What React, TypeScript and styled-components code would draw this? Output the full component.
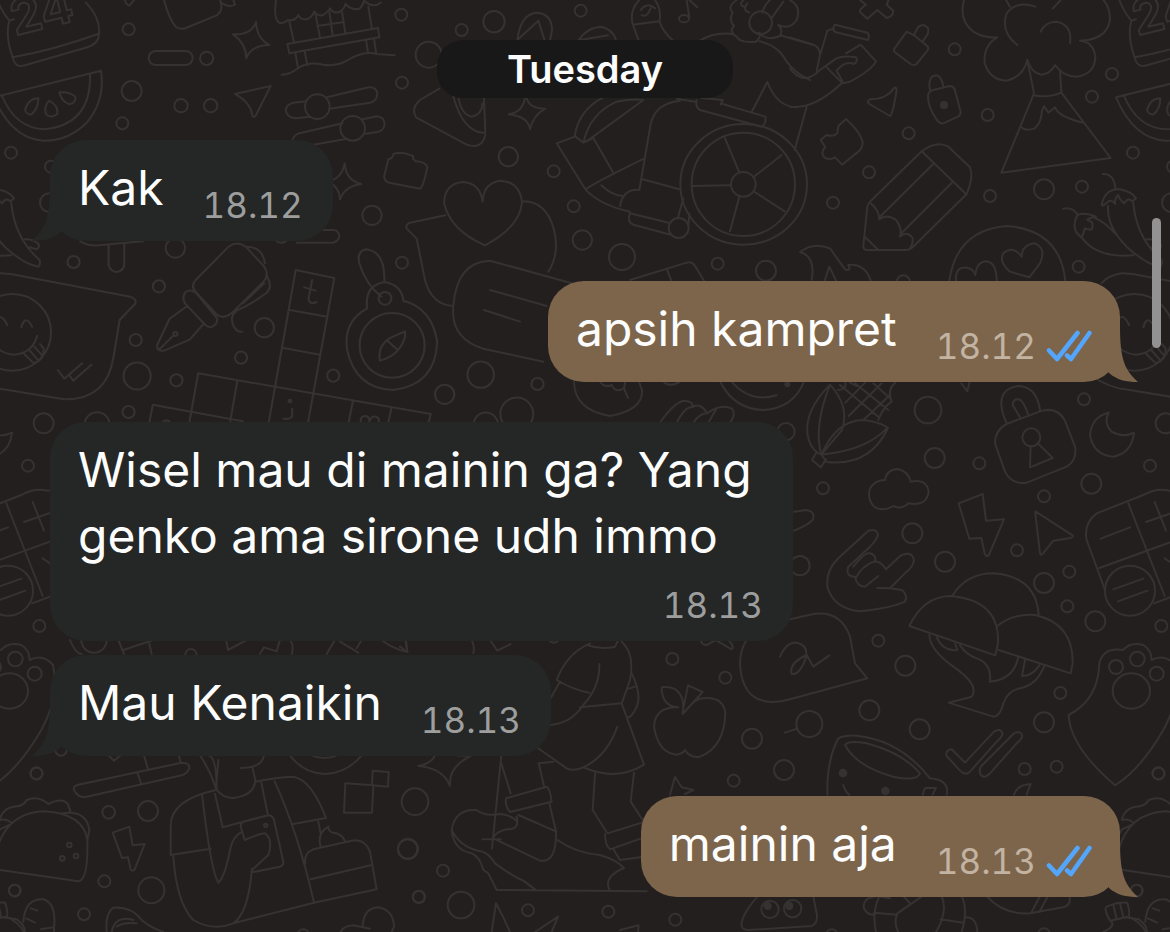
import React from "react";
import styled, { createGlobalStyle, css } from "styled-components";

const color = {
  page: "#231f1f",
  doodle: "#363232",
  pill: "#181818",
  incoming: "#242726",
  outgoing: "#7c654b",
  text: "#fdfdfd",
  timeIn: "#9d9e9d",
  timeOut: "#c2b3a2",
  tick: "#53a6fb",
  scroll: "#949192",
};

const GlobalStyle = createGlobalStyle`
  * { box-sizing: border-box; }
  body {
    margin: 0;
    background: ${color.page};
    color: ${color.text};
    font-family: Inter, "Noto Sans", sans-serif;
  }
`;

const Page = styled.main`
  position: relative;
  min-height: 100vh;
  overflow: hidden;
`;

const Wallpaper = styled.svg`
  position: absolute;
  inset: 0;
  width: 100%;
  height: 100%;
`;

const Conversation = styled.section`
  position: relative;
  display: flex;
  flex-direction: column;
  padding: 40px 50px 36px;
`;

const DayLabel = styled.h2`
  align-self: center;
  margin: 0;
  padding: 0 70px;
  border-radius: 26px;
  background: ${color.pill};
  font-size: 38px;
  font-weight: 600;
  line-height: 58px;
`;

const Messages = styled.ol`
  display: flex;
  flex-direction: column;
  margin: 0;
  padding: 2px 0 0;
  list-style: none;
`;

type Side = "in" | "out";

const Row = styled.li<{ $side: Side; $grouped?: boolean }>`
  display: flex;
  justify-content: ${(p) => (p.$side === "out" ? "flex-end" : "flex-start")};
  margin-top: ${(p) => (p.$grouped ? "14px" : "40px")};
`;

const Bubble = styled.article<{ $side: Side; $stacked?: boolean }>`
  position: relative;
  display: flex;
  align-items: flex-end;
  column-gap: 39px;
  max-width: 743px;
  padding: 15px 30px 16px 28px;
  border-radius: 36px;
  background: ${(p) => (p.$side === "out" ? color.outgoing : color.incoming)};
  ${(p) =>
    p.$side === "out" &&
    css`
      padding-right: 28px;
    `}
  ${(p) =>
    p.$stacked &&
    css`
      flex-direction: column;
      row-gap: 12px;
    `}
`;

const MessageText = styled.p`
  margin: 0;
  padding-bottom: 4px;
  font-size: 48px;
  line-height: 66px;
`;

const Meta = styled.footer<{ $side: Side }>`
  display: flex;
  align-items: center;
  gap: 10px;
  color: ${(p) => (p.$side === "out" ? color.timeOut : color.timeIn)};
  font-size: 35px;
  line-height: 40px;
  font-variant-numeric: tabular-nums;
`;

const TailShape = styled.svg<{ $side: Side }>`
  position: absolute;
  bottom: 0;
  width: 40px;
  height: 56px;
  ${(p) =>
    p.$side === "out"
      ? css`
          right: -18px;
          fill: ${color.outgoing};
        `
      : css`
          left: -18px;
          fill: ${color.incoming};
          transform: scaleX(-1);
        `}
`;

const ScrollThumb = styled.div`
  position: absolute;
  top: 218px;
  right: 9px;
  width: 9px;
  height: 130px;
  border-radius: 5px;
  background: ${color.scroll};
`;

function Tail({ side }: { side: Side }) {
  return (
    <TailShape $side={side} viewBox="0 0 40 56" aria-hidden="true">
      <path d="M22 0 C22 34 27 44 40 56 C28 56 19 54 11 47 L0 20 L10 0Z" />
    </TailShape>
  );
}

function ReadTicks() {
  return (
    <svg width="46" height="32" viewBox="0 0 46 32" role="img" aria-label="Read">
      <g fill="none" stroke={color.tick} strokeWidth="4.5" strokeLinecap="round" strokeLinejoin="round">
        <path d="M3 20.500 L11 29 L31.500 3" />
        <path d="M21 25.500 L25 29 L43.500 3" />
      </g>
    </svg>
  );
}

type Dot = [number, number, number];

function Dots({ items, stretch = 1 }: { items: Dot[]; stretch?: number }) {
  return (
    <>
      {items.map(([cx, cy, r]) => (
        <ellipse key={`${cx}-${cy}-${r}`} cx={cx} cy={cy} rx={r} ry={r * stretch} />
      ))}
    </>
  );
}

/* Each cluster is drawn on a grid finer than the page. */
function Cluster({
  x,
  y,
  scale = "0.33333",
  children,
}: {
  x: number;
  y: number;
  scale?: string;
  children: React.ReactNode;
}) {
  return <g transform={`translate(${x} ${y}) scale(${scale})`}>{children}</g>;
}

function CakeAndMelon() {
  return (
    <Cluster x={0} y={0}>
      <path d="M-8 0 Q5 35 28 62 M28 62 Q15 110 38 172 Q45 205 75 196 L262 142 Q298 130 297 100 Q302 55 258 8 M38 172 Q160 150 294 102 M28 62 L42 58" />
      <text x="44" y="106" fontSize="146" fontWeight="700" transform="rotate(-14 50 100)">24</text>
      <path d="M-18 292 L303 212 Q316 300 262 366 Q205 424 130 422 Q35 416 -18 292Z M5 285 Q45 385 135 388 Q275 372 270 222" />
      <path d="M115 295 Q85 295 75 330 Q80 345 95 343 Q115 325 115 295Z M147 302 Q128 325 140 345 Q155 355 172 342 Q175 315 147 302Z M178 277 Q185 305 208 313 Q228 310 226 290 Q210 275 178 277Z" />
      <rect x="446" y="153" width="132" height="42" rx="21" />
      <path d="M374 0 Q378 14 388 17 L402 0 M492 0 Q508 60 528 81 Q540 90 558 84 L650 46 Q672 32 660 0 M662 6 Q685 25 705 14 L700 0" />
      <path d="M768 66 Q770 115 808 135 Q755 135 739 174 Q738 130 699 103 Q755 105 768 66Z" />
      <path d="M828 0 Q820 58 838 68 Q852 72 864 60 Q885 65 895 45 Q900 60 920 58 Q938 50 942 35 Q955 50 970 45 Q985 35 990 25 Q1000 42 1018 36 Q1035 25 1036 12 Q1055 32 1078 26 Q1088 18 1092 2 Q1120 26 1142 8" />
      <path d="M868 64 L882 128 M946 40 L960 112 M1105 20 L1116 88 M1026 36 L1036 100 M988 34 L998 106 M952 78 L1032 66 M862 132 L1134 84 L1138 112 L868 160Z M886 158 L894 204 M914 154 L922 196 M1098 120 L1104 158 M1122 116 L1128 156 M845 224 Q870 224 895 204 Q925 184 970 194 Q1010 200 1040 182 Q1090 150 1130 162 L1184 166" />
      <path d="M812 258 L705 282 Q752 308 757 345 Q760 358 768 345Z" />
      <path d="M918 304 L880 308 Q850 318 860 340 Q870 358 895 354 L930 350 M980 292 L1106 262 Q1130 260 1132 282 Q1130 304 1110 308 L988 326 M878 418 Q885 400 905 398 L1028 370 M1088 358 L1130 349 Q1152 350 1154 372 Q1152 392 1132 396 L1092 402 M940 434 L1042 416" />
      <path d="M890 728 L1000 728 Q1018 722 1018 706 Q1014 690 1000 690 L970 690" />
      <Dots items={[[386, 88, 18], [395, 273, 30], [367, 370, 18], [543, 317, 20], [632, 317, 20], [620, 175, 20], [33, 458, 18], [153, 500, 18], [148, 608, 28], [952, 320, 37], [1058, 385, 37], [1116, 646, 29], [526, 744, 29]]} />
      <path d="M1034 490 Q1038 542 1084 552 Q1035 558 1020 598 Q1018 560 985 545 Q1025 535 1034 490Z" />
      <path d="M1195 458 L1180 462 Q1180 475 1165 478 L1152 530 Q1155 548 1175 550 L1260 566 Q1270 560 1282 502 Q1278 486 1248 484 Q1235 476 1240 468 L1215 460Z" />
    </Cluster>
  );
}

function Wheelchair() {
  return (
    <Cluster x={400} y={0}>
      <path d="M352 120 Q362 40 412 38 Q455 42 456 90 L450 122 M352 120 L415 62 L434 122 M535 122 Q560 82 605 80 Q640 90 648 120 M540 120 L624 106" />
      <path d="M716 122 L698 72 Q688 30 718 0 M698 74 L778 64 Q786 30 765 0 M778 64 Q790 98 820 122 M722 30 Q740 5 765 25 M725 45 Q740 55 752 25 M860 0 L868 52 M868 0 L892 22" />
      <ellipse cx="852" cy="56" rx="15" ry="11" />
      <path d="M1010 0 Q980 20 998 38 Q985 60 1002 78 Q985 95 1010 110 Q1020 130 1068 125 Q1085 110 1078 98 Q1100 125 1140 108 Q1150 90 1135 75 Q1170 90 1190 60 Q1205 20 1170 0 M1030 0 Q1015 15 1032 20 M1048 38 Q1025 30 1042 10 M1087 38 Q1092 15 1110 0 M1114 55 L1150 5" />
      <circle cx="1082" cy="68" r="34" />
      <path d="M900 122 Q940 95 1000 102 M1078 124 Q1135 135 1160 185 Q1185 220 1230 240 M1140 106 L1240 135 M1056 334 L1102 246 Q1130 320 1190 322" />
      <path d="M118 266 L60 300 Q32 325 48 352 L200 434 Q245 450 256 405 L252 292 M160 290 Q190 395 250 398 M176 296 Q185 345 215 350 Q245 345 248 310" />
      <path d="M380 292 Q385 325 436 326 Q400 345 390 388 Q385 350 326 343 Q370 335 375 292" />
      <path d="M524 410 Q535 330 610 292 M550 428 Q570 340 650 305 Q700 295 730 300 L560 424 M524 410 L470 430 L556 568 Q600 540 732 476 M526 410 L550 428 L580 414 L642 522 M556 568 Q600 615 690 635 M604 556 Q635 586 668 588" />
      <path d="M840 302 Q765 310 752 372 L718 570 Q670 565 660 618 M728 538 L838 568 M690 640 L806 668 M690 640 Q680 665 700 674 L812 704 M850 595 L834 652 M868 640 L866 672" />
      <path d="M890 300 Q885 320 900 330 L1085 380 Q1100 370 1096 350 L968 312 M830 296 L890 306 M905 294 L968 300 L962 314" />
      <Dots items={[[1030, 553, 155], [1030, 553, 37], [836, 684, 30]]} />
      <ellipse cx="1031" cy="553" rx="190" ry="181" />
      <path d="M975 415 L1017 515 M1062 530 L1145 465 M1064 576 L1154 634 M1018 590 L990 694 M990 556 L878 558" />
      <path d="M248 605 Q250 550 300 542 Q360 545 366 608 Q360 680 255 736 Q150 690 132 608 Q135 550 190 546 Q240 550 248 605Z" />
      <path d="M136 646 L30 668 Q15 675 20 686 L50 716 L75 840 Q95 915 160 918 M370 604 Q440 605 462 690 Q480 760 445 815 M160 918 Q170 785 270 782 L640 884 M160 918 Q150 1015 250 1046 L430 1085 M270 870 L440 918 M252 930 L360 965" />
      <Dots items={[[4, 44, 18], [86, 164, 39], [185, 90, 18], [282, 65, 32], [542, 32, 18], [6, 248, 18], [325, 470, 29], [461, 514, 18], [521, 619, 18], [547, 720, 29], [666, 771, 39], [953, 791, 18], [1098, 812, 30], [6, 788, 18]]} />
      <path d="M690 840 L860 788 Q875 784 884 796 L912 842 M800 806 L814 842" />
    </Cluster>
  );
}

function PencilAndVolcano() {
  return (
    <Cluster x={790} y={0}>
      <path d="M210 0 L228 14 Q208 28 210 36 L232 56 L262 30 L290 54 Q310 48 310 32 L290 14 L296 0" />
      <path d="M0 112 L70 134 Q90 142 90 165 L80 212 M0 205 Q40 260 90 210 L138 176 Q160 165 198 172 Q205 185 192 192 Q165 180 140 212 L158 245 M92 160 L112 92 L130 86 M135 74 L232 98 Q240 105 234 120 L135 96 Q125 85 135 74Z M168 160 L212 134 L258 184 Q245 210 180 245 L158 250 L110 202 M0 320 Q70 330 155 250" />
      <path d="M316 142 L350 95 L372 106 L412 138 Q418 145 412 152 L380 192 Q372 198 362 192 L316 158 Q308 150 316 142Z M372 104 L384 82 Q398 68 414 84 Q418 98 408 110 L400 122" />
      <path d="M430 270 L480 258 Q490 258 494 268 L512 335 Q512 345 504 350 L460 370 Q450 372 442 362 Q412 320 414 285 Q418 272 430 270Z M420 270 Q412 228 440 226 Q455 230 460 260" />
      <circle cx="462" cy="315" r="9" fill={color.doodle} />
      <path d="M312 264 Q290 298 240 298 Q228 305 238 312 L300 348 Q308 345 320 270 Q318 260 312 264Z M50 320 L14 450" />
      <path d="M168 357 Q210 395 218 425 Q218 445 205 455 L156 494 L135 472 Q110 485 98 465 Q95 450 106 442 L92 420 L110 405 Q130 412 142 400 L145 378Z" />
      <path d="M395 454 Q440 420 475 440 L540 502 Q552 530 530 582 L368 742 Q360 750 350 750 L230 750 Q220 750 220 738 L232 620 Q235 608 245 600Z M395 454 L528 582 M432 490 L270 650 M486 548 L332 702 M240 608 Q268 630 268 658 Q290 640 318 660 Q338 685 330 710 Q350 690 368 714 Q370 730 360 745 M222 708 L265 750" />
      <path d="M522 0 Q505 60 550 95 Q580 115 622 112 Q580 135 584 190 Q600 240 650 242 Q700 230 712 180 Q725 220 755 224 Q780 222 795 195 Q820 230 860 230 Q915 222 916 170 Q910 125 870 122 Q950 120 960 60 Q960 20 940 0 M648 0 L660 20 M736 20 Q680 0 650 40 Q630 95 682 135 M752 95 Q765 65 800 65 Q848 75 840 130 M812 0 L788 26" />
      <path d="M712 180 L732 280 L634 518 L962 474 L814 278 L810 210 M730 286 Q775 295 814 278 M692 380 Q705 395 735 385 Q755 365 755 335 L762 318 L775 338 L795 322 Q805 350 880 368" />
      <path d="M938 522 Q972 520 976 565 M935 615 Q945 565 990 568 Q1025 575 1038 595 Q1030 600 1028 605 Q1015 590 1002 610 Q985 595 985 585 Q975 590 975 612 Q965 595 950 608 Q940 620 935 615Z M954 618 Q950 680 1010 740 Q1070 795 1112 800 Q1118 790 1115 780 Q1040 715 1030 610 M820 626 Q845 620 862 642 M862 645 Q885 635 918 650 Q890 655 892 660 Q915 665 905 688 Q890 690 885 685 Q880 700 875 712 Q840 690 862 645Z M912 652 Q950 670 975 700 M875 712 Q920 775 1030 766 M1070 718 Q1090 715 1110 730 Q1118 740 1105 748 L1085 742" />
      <Dots items={[[494, 148, 18], [356, 400, 18], [237, 517, 18], [129, 608, 18], [593, 345, 18], [600, 588, 18], [762, 568, 30], [876, 560, 18], [906, 290, 18], [966, 222, 18], [866, 800, 18], [340, 846, 20]]} />
      <path d="M65 840 Q78 770 30 756 Q70 725 120 745 L165 808 Q185 815 175 795 Q225 790 242 842 M104 842 L118 800 L138 842 M478 842 Q500 690 650 678 Q810 690 826 842 M498 842 Q495 800 530 803 Q550 805 556 825 Q560 785 590 784 Q620 790 620 842 M695 770 Q695 735 735 730 Q770 745 750 790 L718 832 L660 815 Q625 785 640 760 Q670 735 695 770Z" />
      <path d="M934 850 Q955 826 996 820" />
    </Cluster>
  );
}

function PenAndCompass() {
  return (
    <Cluster x={0} y={230} scale="0.35714 0.33333">
      <path d="M225 34 Q245 48 275 46 L400 34 M304 46 L304 105 Q310 126 328 126 Q348 122 348 100 L348 42 M775 34 Q788 42 800 34" />
      <path d="M0 130 Q30 130 60 138 L365 200 Q385 208 378 222 L335 270 L318 380 Q300 510 180 508 L0 476" />
      <ellipse cx="35" cy="307" rx="108" ry="115" />
      <path d="M-20 290 Q-2 235 20 285 M60 292 Q70 250 90 290 M-30 330 Q0 372 40 374 Q90 370 104 318 M68 372 L95 400 Q125 390 122 355 L112 342 M82 360 L105 388 M96 350 L116 374 M162 420 L180 446 L230 400 M196 438 L205 452 L256 404" />
      <path d="M640 50 Q665 30 690 52 L740 110 Q755 135 738 155 L648 250 Q625 270 605 252 L550 188 Q532 170 548 150Z M690 50 Q735 50 742 100 M748 140 Q765 170 745 190 Q700 225 665 240 Q640 260 655 290 Q665 308 678 305 M740 160 L680 220 M520 186 Q535 175 550 190 L608 265 Q610 285 590 292 Q580 290 575 285 L518 220 Q508 200 520 186Z M524 228 L475 266 L440 345 Q438 365 460 362 L532 328 L568 284 M448 356 L486 316" />
      <circle cx="491" cy="312" r="6" />
      <path d="M828 120 L936 144 L862 580 M828 120 L752 580 M812 240 L916 260 M794 354 L896 374 M555 430 L1206 552 L1200 578 M555 430 L530 578 M664 456 L644 578 M988 514 L976 578 M1096 534 L1088 574 M428 524 L680 574 M428 524 L418 578" />
      <path d="M874 150 L864 205 Q866 226 886 216 M852 172 L884 182 M818 536 L818 560 Q810 570 794 566 M1010 575 Q1010 556 1024 558 Q1036 562 1034 575 Q1040 556 1052 560 Q1064 564 1060 578 M456 576 Q466 566 476 576" />
      <circle cx="812" cy="513" r="4" fill={color.doodle} />
      <path d="M1028 235 Q1020 165 1078 156 Q1125 165 1130 214 M1076 156 Q1080 65 1025 58 Q998 65 1006 100 Q1025 165 1068 200 M1028 235 Q960 275 972 360 Q995 475 1100 480 Q1220 465 1224 335 Q1210 235 1130 212 M1134 304 L1134 320 Q1120 375 1064 392 Q1056 350 1090 325Z M1086 334 L1114 360" />
      <Dots
        stretch={1.07}
        items={[[1078, 205, 18], [1098, 346, 91], [206, 96, 17], [445, 169, 17], [380, 330, 17], [384, 438, 38], [494, 451, 17], [360, 546, 17], [740, 293, 27], [675, 383, 17], [933, 437, 17], [1346, 434, 37], [1245, 493, 27], [1505, 462, 17], [1447, 552, 46], [1360, 584, 34], [272, 584, 35]]}
      />
    </Cluster>
  );
}

function HandAndFace() {
  return (
    <Cluster x={500} y={200}>
      <path d="M222 540 Q220 630 330 648 Q430 630 426 570 L415 540 M300 545 Q315 565 335 555 Q345 580 372 565 L384 594 M372 565 L376 545 M480 668 Q520 610 550 602 Q585 605 575 622 Q600 605 622 640 Q660 610 695 625 Q710 640 690 668 M530 668 Q555 620 575 622 M580 668 Q600 640 620 640 M625 668 L650 625 M658 540 Q700 628 790 630 Q880 625 912 545 M695 545 Q750 610 830 586" />
      <path d="M490 544 Q510 565 540 544" />
      <circle cx="862" cy="553" r="6" fill={color.doodle} />
    </Cluster>
  );
}

function CornAndLock() {
  return (
    <Cluster x={790} y={370}>
      <path d="M120 44 Q45 120 52 190 Q60 240 94 254 Q70 170 120 44 Q180 110 156 180 L94 254 Q140 150 220 150 Q270 155 294 174 Q240 290 110 276 L94 254 Q230 240 290 175 M78 250 L66 270 L92 292 L108 268 M315 38 Q290 60 305 95 Q280 110 265 150 M180 38 L200 48 M144 60 Q170 60 166 38 M150 45 L265 140 M195 40 L295 120 M250 40 L300 85 M225 38 L166 98 M275 40 L176 138 M300 75 L220 150" />
      <path d="M285 330 Q290 298 325 297 Q355 305 362 335 Q410 325 416 365 Q410 410 355 400 Q335 420 310 408 Q280 425 255 412 Q230 390 240 355 Q255 330 285 330Z" />
      <path d="M514 40 L532 64 L538 38 M650 160 Q605 60 685 48 Q740 50 750 120 M690 142 L668 105 Q670 85 686 88 Q700 90 715 135 M615 220 Q615 180 650 162 L750 124 Q800 108 824 150 L855 230 Q862 270 830 290 L710 338 Q665 345 645 305Z M722 228 L720 292 L788 264 L744 220" />
      <circle cx="724" cy="202" r="27" />
      <path d="M956 128 Q905 140 900 195 Q910 255 970 260 Q1025 250 1032 188 Q1000 205 965 185 Q940 160 956 128Z M506 400 L578 372 L588 452 L642 448 L596 556 Q588 562 584 550 L574 504 L538 506Z M736 424 L848 496 Q850 502 842 504 L790 512 L758 552 Q750 558 750 548 L736 432Z" />
      <path d="M925 30 Q960 50 996 57" />
      <path d="M12 425 L50 420 Q75 425 70 445 Q65 460 12 482 M112 650 Q108 600 145 565 L235 482 Q262 475 264 495 Q260 510 240 530 L175 590 Q165 620 195 620 Q200 650 225 650 L265 618 M190 590 Q225 545 240 550 Q260 555 255 575 M200 620 Q215 590 250 575 Q270 570 288 598 L330 558 Q365 540 372 570 Q370 590 350 605 L300 655 L335 660 Q355 675 345 695 Q300 715 210 724 Q130 715 112 650 M262 654 L300 655" />
      <path d="M488 676 Q530 610 610 610 Q740 620 746 736 M358 768 Q400 680 480 678 Q630 690 624 820 L616 856Z M622 768 Q670 730 735 735 Q850 760 848 880 L842 910 L626 840 M418 795 Q420 840 490 890 Q570 945 545 980 L476 998 L610 1040 Q630 1040 640 1000 Q655 960 690 955 Q740 945 762 890 M440 802 Q460 845 502 840 L496 822 M510 826 Q530 855 560 865 Q605 880 600 935 Q670 930 685 862 M705 870 L696 918 Q725 920 748 886" />
      <path d="M1140 362 Q1100 352 1060 375 L920 430 Q880 460 890 510 L945 660 M1015 400 L1124 678 M928 594 L1220 488 M932 506 L1020 472 M1068 456 L1160 424 M1094 396 L1128 482 M970 658 L1060 626 M984 694 L1072 662 M1092 700 L1240 645 Q1290 620 1270 560 L1205 400 Q1185 355 1140 362 M1124 565 L1175 600" />
      <circle cx="1020" cy="662" r="75" />
      <path d="M0 748 L60 734 Q150 715 180 800 L195 880 L232 925 L0 988 Q-140 1025 -150 885 Q-150 800 -80 770Z M-30 860 Q-10 815 20 818 Q55 825 48 862 Q30 915 5 912 Q-5 880 50 855 L70 890 L118 856" />
      <Dots items={[[414, 120, 40], [434, 264, 30], [568, 280, 18], [99, 355, 18], [882, 88, 18], [904, 341, 30], [1127, 160, 30], [1080, 287, 18], [762, 379, 18], [367, 490, 30], [465, 575, 30], [681, 541, 18], [762, 639, 30], [838, 605, 18], [832, 709, 18], [916, 754, 30], [1114, 768, 18], [30, 587, 29], [265, 812, 18], [346, 887, 30], [-12, 185, 26]]} />
    </Cluster>
  );
}

function PawAndMug() {
  return (
    <Cluster x={790} y={600}>
      <path d="M836 345 Q925 300 928 190 Q940 140 1000 150 Q1020 125 1060 135 Q1085 150 1085 180 Q1125 160 1155 195 Q1175 290 1120 390 Q1050 510 975 556 Q840 440 836 345Z" />
      <ellipse cx="1024" cy="273" rx="56" ry="53" />
      <path d="M112 584 Q110 480 145 415 Q165 405 200 407 Q330 420 420 535 Q480 540 470 584 M398 584 L405 564 L438 564 L428 584 M165 435 Q175 420 230 430 Q340 460 390 520 Q380 545 310 530 Q200 500 165 435Z M160 555 Q165 575 178 584 M672 584 Q680 555 722 552 L710 584" />
      <circle cx="159" cy="519" r="10" fill={color.doodle} />
      <circle cx="286" cy="573" r="10" fill={color.doodle} />
      <path d="M470 468 Q465 450 485 448 L525 488 L612 395 Q632 382 638 402 Q635 412 620 425 L540 515 Q525 528 510 512Z M570 520 Q565 505 580 492 L672 400 Q692 390 697 408 Q695 418 680 430 L600 520 Q580 540 570 520Z" />
      <path d="M590 888 Q640 945 720 940 L820 922 Q845 915 838 888 M724 938 L750 888 M748 936 L774 888 M260 888 Q215 895 222 925 Q235 950 256 942 M260 888 L300 895 M268 890 Q245 935 258 996 M252 938 L322 944 M340 888 L358 908 M400 886 L322 940 Q310 970 325 996 M455 888 Q475 935 438 996 M515 888 Q535 930 515 996 M452 958 L520 968 M525 952 Q560 950 562 996 M950 920 Q940 925 960 962 L1015 950 Q1022 945 1012 908 Q985 905 950 920Z M970 915 L980 956 M990 910 L1000 952 M965 965 Q975 980 940 996 M1015 950 Q1050 965 1068 996" />
      <Dots items={[[978, 201, 21], [1042, 177, 22], [1100, 221, 21], [58, 372, 39], [238, 331, 30], [389, 388, 30], [762, 367, 30], [811, 279, 18], [704, 507, 18], [800, 500, 18], [1106, 521, 18], [-18, 510, 30], [1040, 871, 17], [762, 1003, 18], [125, 1006, 18]]} />
    </Cluster>
  );
}

function TacoAndPhone() {
  return (
    <Cluster x={0} y={640}>
      <path d="M210 0 Q225 40 245 42 M355 0 L372 42 M370 30 L460 0 M445 0 L455 42 M678 0 L684 30 L740 0 M780 42 L792 22 L830 34 L840 0 M870 0 Q882 15 876 42 M980 42 L1005 0 M1020 5 L1075 38 M1085 0 L1070 25 M1145 0 Q1175 25 1222 36 L1216 0" />
      <path d="M325 346 L342 362 L362 346 M432 346 L444 388 M536 346 L542 368 M235 434 L545 368 Q570 368 568 385 Q560 402 545 406 L260 470 Q235 476 222 450 Q218 438 235 434Z M412 398 L424 432" />
      <path d="M0 535 Q10 505 40 500 Q70 500 80 480 Q115 465 145 492 Q190 470 205 495 L212 518 M-32 685 L235 724 Q265 720 262 600 Q250 520 130 514 Q20 520 -10 630 L-32 685 M188 520 Q260 510 268 570 L262 600 M0 540 Q20 535 35 550 M0 568 L28 555 M-32 685 Q-45 640 0 568" />
      <path d="M338 578 L388 560 L398 616 L434 612 L404 688 Q398 696 392 688 L384 652 L366 654Z" />
      <path d="M600 346 Q630 390 648 445 L655 360 M625 346 Q650 350 650 450 Q670 475 700 474 Q765 465 766 420 L758 385 M722 384 Q785 385 792 346 M648 450 Q510 480 512 560 L512 645 L632 626 M606 462 Q632 690 655 728 Q675 710 690 630 Q700 585 726 576 M645 462 L668 562 L804 526 L784 428 M766 425 Q830 412 880 410 Q935 420 978 534 L880 552 M824 424 Q895 580 942 788 M520 650 Q530 790 580 840 Q640 875 700 850 Q745 820 756 686 M722 560 Q722 545 740 542 L805 526 Q818 526 822 540 L850 665 Q852 676 840 680 L760 696 M722 560 L734 600 Q780 580 795 580 Q820 600 805 645 L756 690 M700 850 L942 788 L1130 748 L1110 635 Q1095 595 1055 602 L940 628 Q910 640 916 670 M932 718 L1112 676 M955 545 L962 580 M962 620 Q950 580 985 560 Q985 575 1000 578 Q1025 580 1034 602 M1032 518 L1036 430 L1120 436 L1116 518Z M1118 392 L1166 396 L1164 440 L1116 436Z M870 346 Q910 400 975 402 Q1040 400 1085 346 M935 346 Q975 362 1010 346" />
      <path d="M70 845 Q75 775 130 778 Q170 790 162 865 L162 876 M92 805 L112 812 M78 835 L105 848 M10 832 L50 838 Q75 855 75 876 M122 868 L160 862 M320 876 Q315 820 340 803 Q395 800 425 840 Q450 862 490 876 M335 876 Q345 825 400 840 M350 860 Q370 845 410 850 M1022 876 Q1030 858 1060 856 L1110 866 M1088 860 Q1090 805 1135 802 Q1180 810 1182 860 L1175 876" />
      <Dots items={[[208, 615, 7], [187, 655, 7], [228, 648, 7], [797, 556, 5], [282, 0, 38], [109, 400, 18], [326, 517, 19], [444, 513, 30], [313, 724, 18], [454, 751, 39], [44, 752, 18], [252, 823, 18], [1223, 627, 29], [1256, 770, 18], [573, 44, 17], [910, 886, 18], [183, 330, 17]]} />
    </Cluster>
  );
}

function Walker() {
  return (
    <Cluster x={400} y={630}>
      <path d="M215 30 Q225 50 220 70 M270 30 L292 62 L332 42 M0 50 L22 66 L18 30 M560 45 Q605 60 645 50 L655 30 M570 40 Q500 70 470 150 Q520 180 568 188 M598 102 Q600 170 550 225 Q510 285 440 285 M480 155 L450 208 M665 35 Q705 70 690 150 Q680 180 665 220 L540 232 M695 130 Q730 200 705 240 Q695 260 685 262 M680 178 L705 170 M665 220 L732 404 Q650 455 550 412 M405 348 L500 415 Q520 425 550 412 Q620 380 652 290 M460 395 L416 400 L432 468 M318 505 L440 470 Q450 475 455 515 L330 546 Q315 530 318 505Z M448 520 L468 604 Q470 700 420 692 L280 625 M355 555 L468 604 M350 560 Q360 600 320 598 Q290 605 280 622 M304 376 L276 655 M304 400 L332 490 M248 628 L302 628 M230 540 Q165 535 155 600 Q160 660 215 670 Q240 680 250 720 L265 730 L290 780 L740 784 M230 540 Q255 560 300 552 Q335 555 352 575 M155 600 Q180 650 235 662 Q265 665 285 700 Q340 740 370 752 L405 778 M472 630 Q530 670 600 675 Q650 690 672 714 Q610 740 628 778 M585 430 L578 540 L622 610 L732 576 M702 428 L692 515 L728 570 M615 612 Q615 645 630 658 L732 622 M640 658 L660 690 L732 680" />
      <path d="M55 408 Q95 400 105 376 M165 376 L212 378 Q145 410 150 468 Q130 415 55 408 M810 494 L825 440 L845 472 L880 480 L855 492" />
      <path d="M835 232 Q785 230 785 172 Q850 165 850 235 L848 250 M850 235 L864 166 L908 186 L848 252 M835 232 Q765 230 762 290 Q775 370 830 374 Q850 370 855 360 Q870 385 900 380 Q975 350 976 245 Q965 195 900 206 L880 216" />
      <path d="M902 30 Q905 45 920 45 L945 32 M950 32 L995 58 Q1005 50 985 30 M1155 308 L1192 296" />
      <path d="M275 906 L288 820 Q310 860 330 906 M405 906 L474 860 L455 906 M660 900 L716 886 L714 906 M1072 800 Q1020 860 1025 890 Q1030 900 1045 900 L1235 888 Q1255 880 1250 850 L1240 800" />
      <Dots items={[[45, 515, 40], [24, 657, 30], [129, 722, 18], [57, 801, 18], [183, 825, 40], [384, 841, 18], [625, 845, 18], [826, 869, 18], [817, 87, 18], [976, 143, 18], [1056, 326, 30], [1001, 452, 18], [1110, 838, 26], [1178, 836, 26], [462, 20, 18]]} />
      <circle cx="1103" cy="828" r="9" fill={color.doodle} />
      <circle cx="1168" cy="828" r="9" fill={color.doodle} />
    </Cluster>
  );
}

const TILE_WIDTH = 1122;
const TILES = [-1, 0, 1, 2];

function ChatWallpaper() {
  return (
    <Wallpaper aria-hidden="true">
      <defs>
        <g id="doodles">
          <CakeAndMelon />
          <Wheelchair />
          <PencilAndVolcano />
          <PenAndCompass />
          <HandAndFace />
          <CornAndLock />
          <PawAndMug />
          <TacoAndPhone />
          <Walker />
        </g>
      </defs>
      <g
        fill="none"
        stroke={color.doodle}
        strokeWidth="6"
        strokeLinecap="round"
        strokeLinejoin="round"
        fontFamily="Inter, sans-serif"
      >
        {TILES.map((n) => (
          <use key={n} href="#doodles" x={n * TILE_WIDTH} />
        ))}
      </g>
    </Wallpaper>
  );
}

interface Message {
  id: number;
  side: Side;
  text: string;
  time: string;
  stacked?: boolean;
  grouped?: boolean;
  tail?: boolean;
}

const messages: Message[] = [
  { id: 1, side: "in", text: "Kak", time: "18.12", tail: true },
  { id: 2, side: "out", text: "apsih kampret", time: "18.12", tail: true },
  { id: 3, side: "in", text: "Wisel mau di mainin ga? Yang genko ama sirone udh immo", time: "18.13", stacked: true },
  { id: 4, side: "in", text: "Mau Kenaikin", time: "18.13", grouped: true, tail: true },
  { id: 5, side: "out", text: "mainin aja", time: "18.13", tail: true },
];

export default function App() {
  return (
    <Page>
      <GlobalStyle />
      <ChatWallpaper />
      <Conversation>
        <DayLabel>Tuesday</DayLabel>
        <Messages>
          {messages.map((m) => (
            <Row key={m.id} $side={m.side} $grouped={m.grouped}>
              <Bubble $side={m.side} $stacked={m.stacked}>
                {m.tail && <Tail side={m.side} />}
                <MessageText>{m.text}</MessageText>
                <Meta $side={m.side}>
                  <time dateTime={m.time.replace(".", ":")}>{m.time}</time>
                  {m.side === "out" && <ReadTicks />}
                </Meta>
              </Bubble>
            </Row>
          ))}
        </Messages>
      </Conversation>
      <ScrollThumb />
    </Page>
  );
}
